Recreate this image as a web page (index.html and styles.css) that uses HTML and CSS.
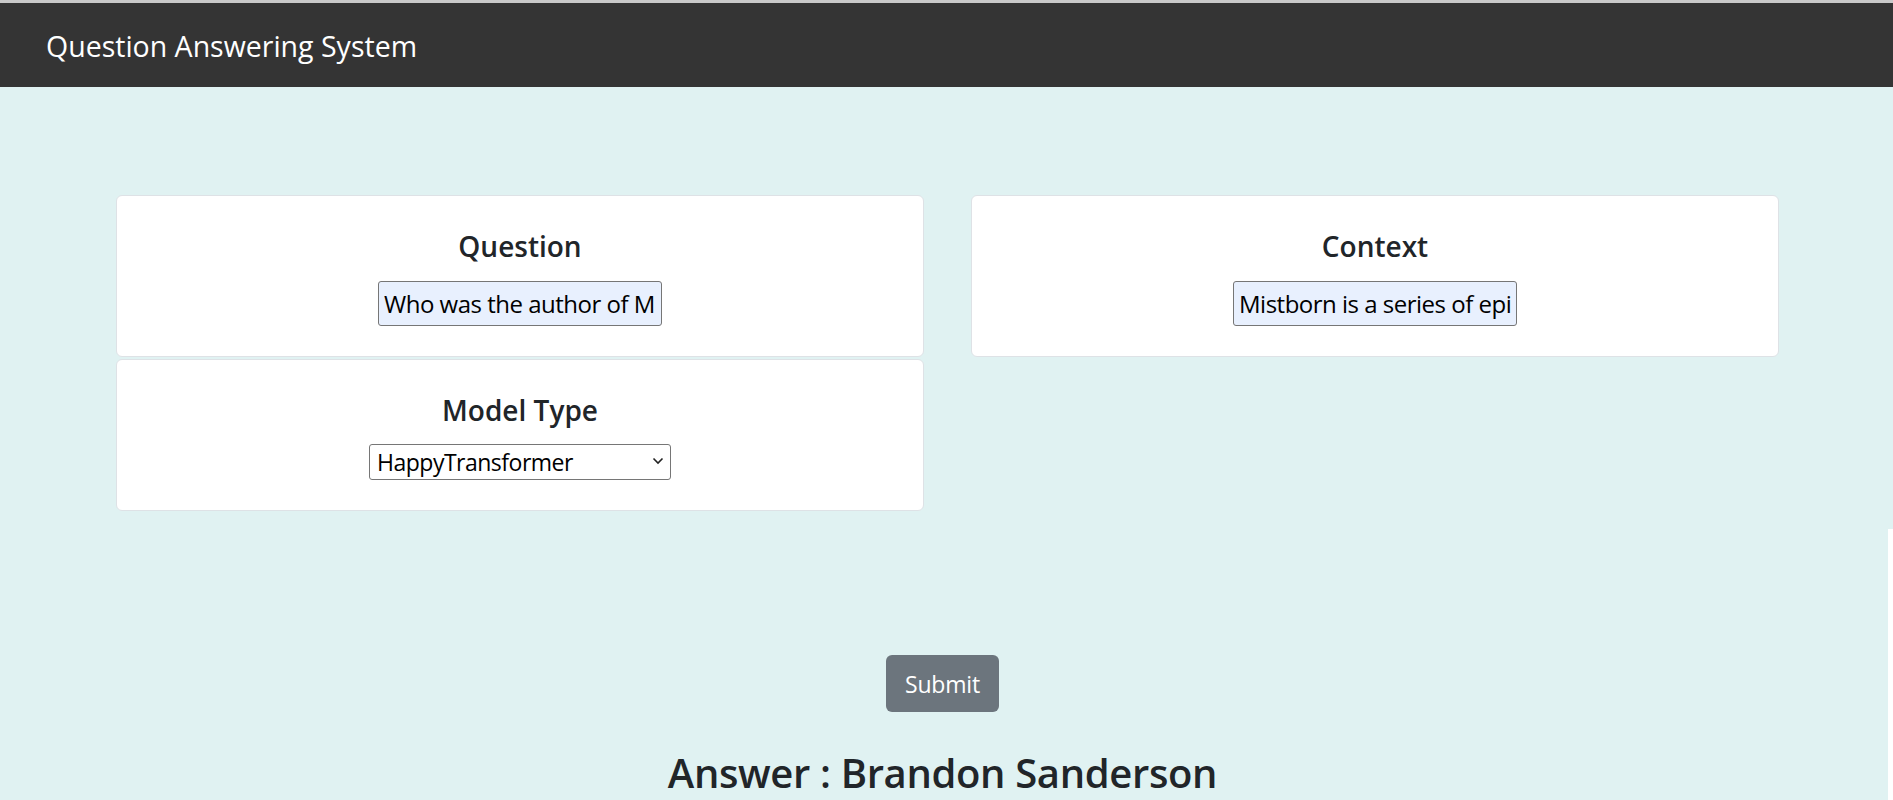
FILE: index.html
```html
<!DOCTYPE html>
<html lang="en">
<head>
<meta charset="utf-8">
<title>Question Answering System</title>
<link rel="stylesheet" href="styles.css">
</head>
<body>
<nav class="navbar">
  <span class="brand">Question Answering System</span>
</nav>
<main class="main">
  <form class="form" onsubmit="return false">
    <div class="grid">
      <div class="col">
        <div class="card card-q">
          <h3 class="card-title">Question</h3>
          <input class="field" type="text" value="Who was the author of Mistborn?">
        </div>
        <div class="card card-m">
          <h3 class="card-title">Model Type</h3>
          <div class="select-wrap">
            <select class="select">
              <option>HappyTransformer</option>
              <option>BERT</option>
            </select>
            <svg class="chev" width="12" height="8" viewBox="0 0 12 8"><path d="M1.5 1.5 L6 6 L10.5 1.5" fill="none" stroke="#222" stroke-width="1.6"/></svg>
          </div>
        </div>
      </div>
      <div class="col">
        <div class="card card-q">
          <h3 class="card-title">Context</h3>
          <input class="field" type="text" value="Mistborn is a series of epic fantasy novels written by American author Brandon Sanderson.">
        </div>
      </div>
    </div>
    <div class="actions">
      <button class="btn" type="submit">Submit</button>
      <h1 class="answer">Answer : Brandon Sanderson</h1>
    </div>
  </form>
</main>
<div class="edge"></div>
</body>
</html>
```

FILE: styles.css
```css
* { box-sizing: border-box; }
html, body { margin: 0; padding: 0; }
body {
  background: #e0f2f2;
  font-family: "Open Sans", "Noto Sans", sans-serif;
  color: #212529;
  height: 800px;
  overflow: hidden;
  position: relative;
}
.navbar {
  border-top: 3px solid #c9c9c9;
  background: #343434;
  height: 87px;
  display: flex;
  align-items: center;
  padding-left: 46px;
}
.brand {
  color: #fff;
  font-size: 28.5px;
  line-height: 1;
  margin-top: 2px;
}
.main {
  padding-top: 108px;
}
.grid {
  display: grid;
  grid-template-columns: 808px 808px;
  column-gap: 47px;
  padding-left: 116px;
}
.col {
  display: flex;
  flex-direction: column;
  gap: 2px;
}
.card {
  background: #fff;
  border: 1px solid #dee2e6;
  border-radius: 6px;
  display: flex;
  flex-direction: column;
  align-items: center;
  padding: 33px 0 30px;
}
.card-title {
  margin: 0 0 18px;
  font-size: 28px;
  font-weight: 600;
  line-height: 34px;
}
.card-m .card-title { margin-bottom: 17px; }
.field {
  width: 284px;
  height: 45px;
  border: 1px solid #767676;
  border-radius: 3px;
  background: #e8f0fe;
  font-family: inherit;
  font-size: 24px;
  letter-spacing: -0.5px;
  color: #000;
  padding: 0 5px;
}
.select-wrap {
  position: relative;
  width: 302px;
  height: 36px;
}
.select {
  appearance: none;
  -webkit-appearance: none;
  width: 100%;
  height: 100%;
  border: 1px solid #767676;
  border-radius: 3px;
  background: #fff;
  font-family: inherit;
  font-size: 23px;
  letter-spacing: -0.5px;
  color: #000;
  padding: 0 30px 0 7px;
}
.chev {
  position: absolute;
  right: 7px;
  top: 13px;
  pointer-events: none;
}
.actions {
  display: flex;
  flex-direction: column;
  align-items: center;
  padding-top: 144px;
  padding-right: 8px;
}
.btn {
  width: 113px;
  height: 57px;
  background: #6c757d;
  color: #fff;
  border: none;
  border-radius: 6px;
  font-family: inherit;
  font-size: 23px;
  letter-spacing: -0.2px;
  padding: 0;
}
.answer {
  margin: 37px 0 0;
  font-size: 40px;
  font-weight: 600;
  line-height: 48px;
  letter-spacing: -0.35px;
}
.edge {
  position: absolute;
  right: 0;
  top: 529px;
  bottom: 0;
  width: 5px;
  background: #fff;
}
```
